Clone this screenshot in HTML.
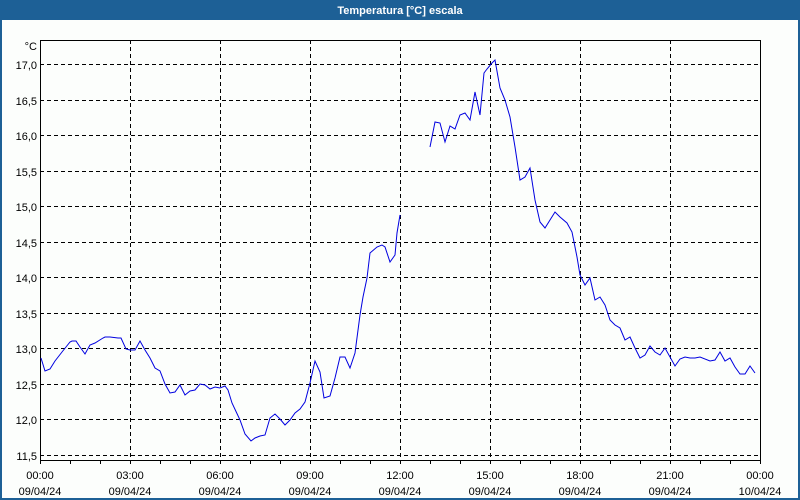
<!DOCTYPE html>
<html><head><meta charset="utf-8"><style>
html,body{margin:0;padding:0;width:800px;height:500px;overflow:hidden;background:#fcfefc}
svg{display:block}
text{font-family:"Liberation Sans","DejaVu Sans",sans-serif;font-size:11px;fill:#000}
</style></head><body>
<svg width="800" height="500" viewBox="0 0 800 500" xmlns="http://www.w3.org/2000/svg">
<rect x="0" y="0" width="800" height="500" fill="#fcfefc"/>
<rect x="0" y="0" width="800" height="20" fill="#1d6096"/>
<text x="400" y="14" text-anchor="middle" style="font-weight:bold;fill:#fff">Temperatura [°C] escala</text>
<rect x="0" y="20" width="2" height="480" fill="#1d6096"/>
<rect x="798" y="20" width="2" height="480" fill="#1d6096"/>
<rect x="0" y="498" width="800" height="2" fill="#1d6096"/>
<g stroke="#000" stroke-width="1" stroke-dasharray="4,3" fill="none">
<path d="M40 64.5H760M40 100.5H760M40 135.5H760M40 171.5H760M40 206.5H760M40 242.5H760M40 277.5H760M40 313.5H760M40 348.5H760M40 384.5H760M40 419.5H760M40 455.5H760"/>
<path d="M130.5 40V460M220.5 40V460M310.5 40V460M400.5 40V460M490.5 40V460M580.5 40V460M670.5 40V460"/>
</g>
<path d="M40.5 40V460.5H760.5V40.5H40" stroke="#000" fill="none"/>
<g stroke="#000">
<path d="M70.5 460V464M100.5 460V464M130.5 460V464M160.5 460V464M190.5 460V464M220.5 460V464M250.5 460V464M280.5 460V464M310.5 460V464M340.5 460V464M370.5 460V464M400.5 460V464M430.5 460V464M460.5 460V464M490.5 460V464M520.5 460V464M550.5 460V464M580.5 460V464M610.5 460V464M640.5 460V464M670.5 460V464M700.5 460V464M730.5 460V464M760.5 460V464M40.5 460V464"/>
</g>
<g text-anchor="end">
<text x="37" y="50">°C</text>
<text x="37" y="69">17,0</text><text x="37" y="105">16,5</text><text x="37" y="140">16,0</text>
<text x="37" y="176">15,5</text><text x="37" y="211">15,0</text><text x="37" y="247">14,5</text>
<text x="37" y="282">14,0</text><text x="37" y="318">13,5</text><text x="37" y="353">13,0</text>
<text x="37" y="389">12,5</text><text x="37" y="424">12,0</text><text x="37" y="460">11,5</text>
</g>
<g text-anchor="middle">
<text x="40" y="479">00:00</text><text x="40" y="495">09/04/24</text>
<text x="130" y="479">03:00</text><text x="130" y="495">09/04/24</text>
<text x="220" y="479">06:00</text><text x="220" y="495">09/04/24</text>
<text x="310" y="479">09:00</text><text x="310" y="495">09/04/24</text>
<text x="400" y="479">12:00</text><text x="400" y="495">09/04/24</text>
<text x="490" y="479">15:00</text><text x="490" y="495">09/04/24</text>
<text x="580" y="479">18:00</text><text x="580" y="495">09/04/24</text>
<text x="670" y="479">21:00</text><text x="670" y="495">09/04/24</text>
<text x="760" y="479">00:00</text><text x="760" y="495">10/04/24</text>
</g>
<g fill="none" stroke="#0000e0" stroke-width="1">
<polyline points="41,358 45,371 50,369 55,361 62,352 70,342 72,341 76,341 80,347 85,354 90,345 95,343 103,338 105,337 110,337 118,338 121,338 126,349 130,350 135,350 140,341 145,350 150,358 155,368 160,371 165,384 170,393 175,392 180,385 185,395 190,391 195,390 200,384 205,385 210,389 215,387 220,388 225,386 228,390 232,403 240,420 245,434 251,441 255,438 260,436 265,435 270,418 275,414 280,419 285,425 290,420 295,413 300,409 305,402 310,383 315,361 320,372 324,398 330,396 335,378 340,357 345,357 350,368 355,353 360,315 363,297 367,278 370,253 377,247 382,245 385,247 390,262 395,255 397,233 400,215"/>
<polyline points="430,147 435,122 440,123 445,142 450,126 455,129 460,115 465,113 470,120 475,92 480,115 484,73 487,69 492,63 495,60 500,88 505,100 510,117 515,147 520,180 525,177 530,168 535,200 540,222 545,228 550,220 555,212 560,217 567,223 572,232 577,257 580,275 585,285 590,278 595,300 600,297 605,305 610,320 615,325 620,328 625,340 630,337 635,348 640,358 645,355 650,346 655,352 660,355 665,348 675,366 680,359 685,357 690,358 695,358 700,357 710,361 715,360 720,352 725,361 730,358 735,367 740,374 745,374 750,366 755,373"/>
</g>
</svg>
</body></html>
